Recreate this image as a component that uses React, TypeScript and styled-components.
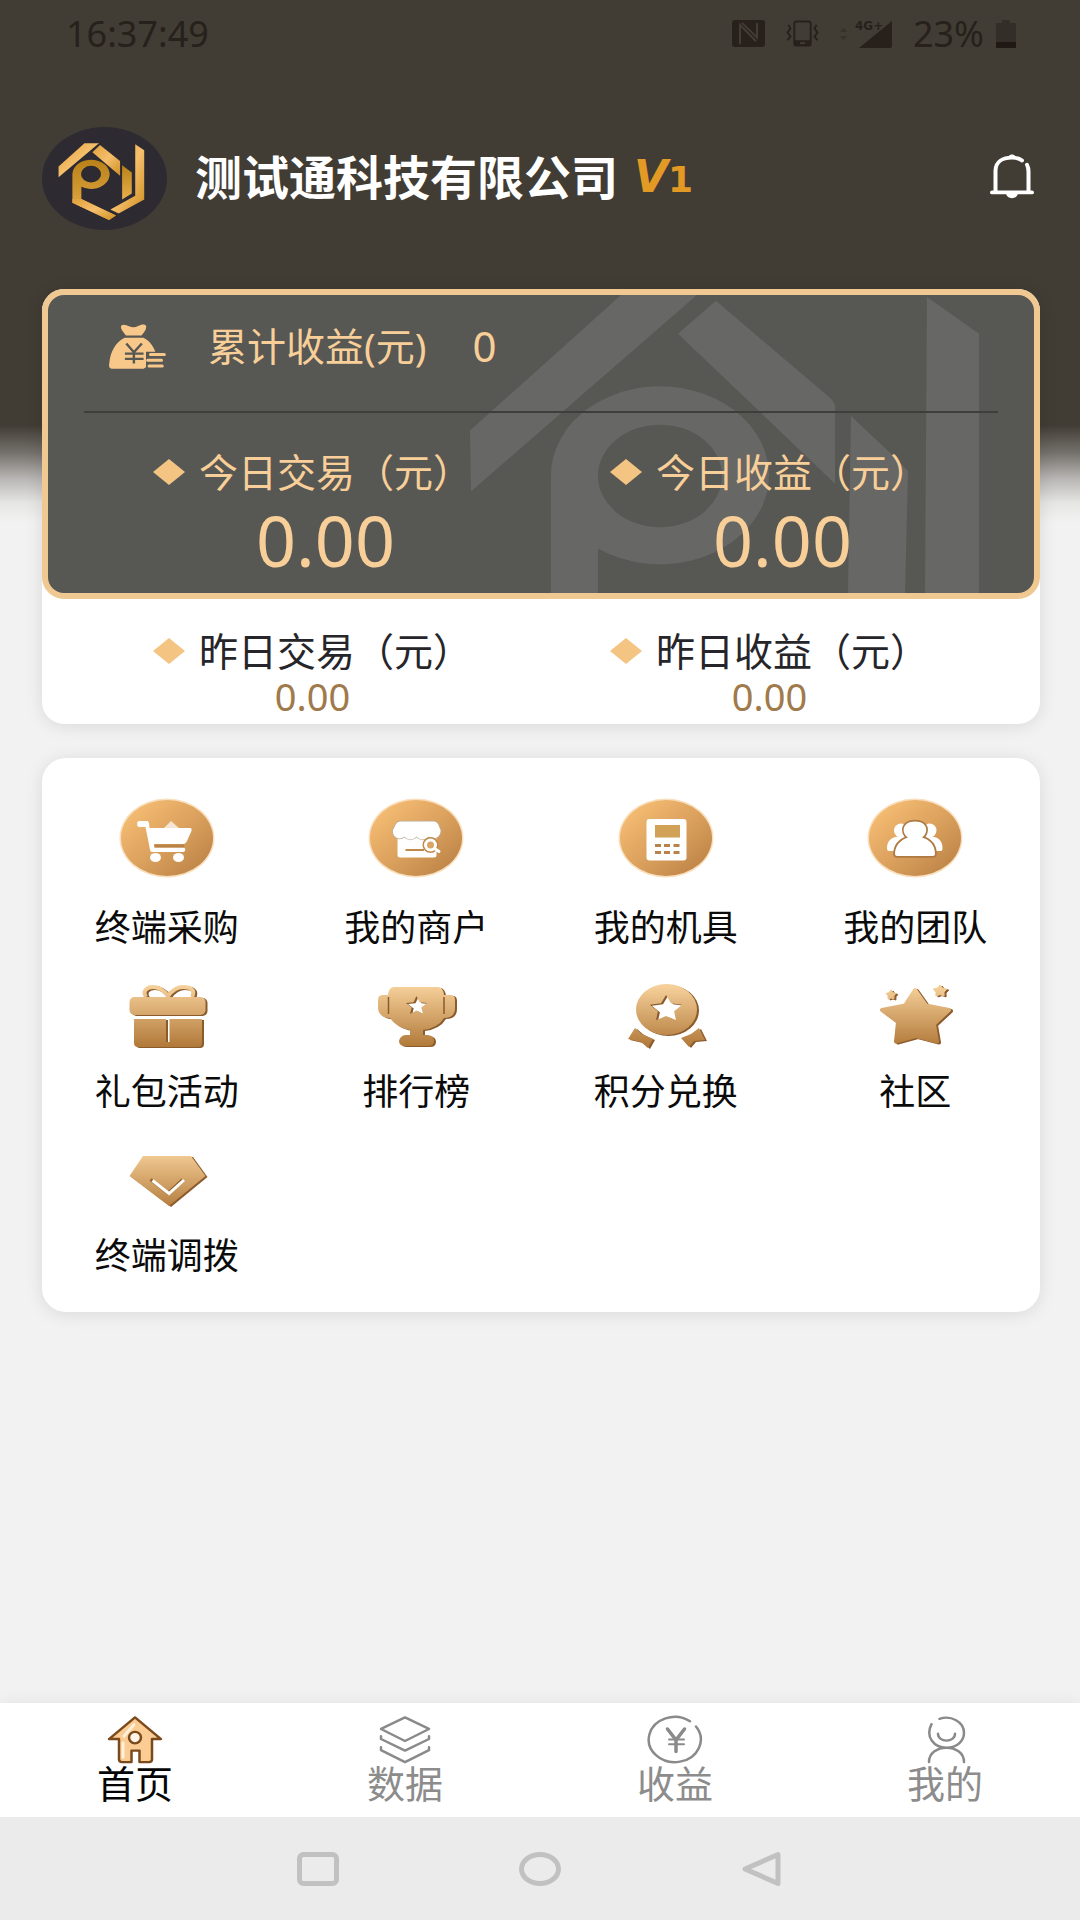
import React from "react";
import styled, { createGlobalStyle } from "styled-components";

const GlobalStyle = createGlobalStyle`
  *, *::before, *::after { box-sizing: border-box; }
  body {
    margin: 0;
    background: #f2f2f2;
    font-family: "Noto Sans", "Noto Sans CJK SC", sans-serif;
  }
  button {
    margin: 0;
    padding: 0;
    border: 0;
    background: none;
    color: inherit;
    font: inherit;
    cursor: pointer;
  }
  svg { display: block; flex: none; }
`;

const Page = styled.div`
  display: flex;
  flex-direction: column;
  min-height: 100vh;
  background: linear-gradient(
    #413d35 0,
    #413c34 425px,
    #75716c 453px,
    #b9b7b5 479px,
    #e6e6e5 503px,
    #f2f2f2 523px
  );
`;

const StatusBar = styled.div`
  display: flex;
  align-items: center;
  justify-content: space-between;
  height: 67px;
  padding: 0 64px 0 66px;
  color: #27201b;
  font-size: 36px;
  line-height: 40px;
`;

const StatusIcons = styled.div`
  display: flex;
  align-items: center;
  gap: 20px;
`;

const Signal = styled.div`
  display: flex;
  align-items: center;
  gap: 8px;
`;

const Battery = styled.div`
  display: flex;
  align-items: center;
  gap: 12px;
`;

const Header = styled.header`
  display: flex;
  align-items: center;
  padding: 60px 46px 59px 42px;
`;

const Company = styled.h1`
  margin: 0 0 0 28px;
  padding-bottom: 4px;
  color: #fff;
  font-size: 47px;
  line-height: 56px;
  font-weight: 700;
  white-space: nowrap;
`;

const Level = styled.span`
  display: flex;
  align-items: baseline;
  margin-left: 16px;
  color: #e39a25;
  font-family: "DejaVu Sans", sans-serif;
  font-size: 36px;
  line-height: 44px;
  font-weight: 700;
`;

const LevelLetter = styled.em`
  font-size: 44px;
  line-height: 44px;
`;

const BellButton = styled.button`
  margin-left: auto;
  padding-bottom: 6px;
`;

const Main = styled.main`
  display: flex;
  flex: 1;
  flex-direction: column;
  gap: 34px;
  padding: 0 40px 40px 42px;
`;

const Summary = styled.section`
  border-radius: 22px;
  background: #fff;
  box-shadow: 0 2px 18px rgba(0, 0, 0, 0.1);
`;

const GoldCard = styled.div`
  position: relative;
  overflow: hidden;
  padding: 0 36px 15px;
  border: 6px solid #efc892;
  border-radius: 22px;
  background: #575754;
  color: #f8cf98;
`;

const Watermark = styled.svg`
  position: absolute;
  top: 0;
  right: 54px;
`;

const TotalRow = styled.div`
  position: relative;
  display: flex;
  align-items: center;
  height: 118px;
  padding: 0 24px 14px;
  border-bottom: 2px solid #3e3e3b;
  font-size: 39px;
  line-height: 48px;
`;

const TotalLabel = styled.span`
  margin: 0 46px 0 42px;
`;

const Total = styled.span`
  font-size: 42px;
`;

const Stats = styled.div<{ $top: number }>`
  position: relative;
  display: grid;
  grid-template-columns: 1fr 1fr;
  padding-top: ${(p) => p.$top}px;
`;

const Yesterday = styled.div`
  padding: 0 42px 8px;
  color: #26262a;
`;

const StatLabel = styled.div`
  display: flex;
  align-items: center;
  justify-content: center;
  gap: 14px;
  font-size: 39px;
  line-height: 48px;
  white-space: nowrap;
`;

const BigValue = styled.div`
  margin-top: 6px;
  padding-left: 26px;
  font-size: 70px;
  line-height: 76px;
  text-align: center;
`;

const SmallValue = styled.div`
  margin-top: 1px;
  color: #a07a4a;
  font-size: 38px;
  line-height: 40px;
  text-align: center;
`;

const Menu = styled.section`
  display: grid;
  grid-template-columns: repeat(4, 1fr);
  padding: 32px 0 30px;
  border-radius: 24px;
  background: #fff;
  box-shadow: 0 2px 18px rgba(0, 0, 0, 0.1);
`;

const MenuItem = styled.button`
  display: flex;
  flex-direction: column;
  align-items: center;
  color: #0b0b0b;
  font-size: 36px;
  line-height: 52px;
`;

const Raised = styled.g`
  filter: drop-shadow(2px 1px 0 #8b5b2c);
`;

const TabBar = styled.nav`
  display: grid;
  grid-template-columns: repeat(4, 1fr);
  height: 114px;
  background: #fff;
  box-shadow: 0 0 16px rgba(0, 0, 0, 0.07);
`;

const Tab = styled.button<{ $active?: boolean }>`
  display: flex;
  flex-direction: column;
  align-items: center;
  padding-top: 12px;
  color: ${(p) => (p.$active ? "#050505" : "#8c8c8c")};
  font-size: 38px;
  line-height: 36px;
`;

const SystemNav = styled.nav`
  display: flex;
  justify-content: center;
  gap: 178px;
  height: 103px;
  background: #ebebeb;
`;

const starPoints = (cx: number, cy: number, rx: number, ry: number, inner = 0.46) =>
  Array.from({ length: 10 }, (_, i) => {
    const a = (Math.PI * i) / 5 - Math.PI / 2;
    const k = i % 2 ? inner : 1;
    return `${(cx + Math.cos(a) * rx * k).toFixed(1)},${(cy + Math.sin(a) * ry * k).toFixed(1)}`;
  }).join(" ");

const HiddenDefs = styled.svg`
  position: absolute;
`;

const Gradients = () => (
  <HiddenDefs width="0" height="0" aria-hidden="true">
    <defs>
      <linearGradient id="coin" x1="0" y1="0" x2="1" y2="1">
        <stop offset="0.1" stopColor="#f6bd74" />
        <stop offset="0.5" stopColor="#dca25e" />
        <stop offset="1" stopColor="#b67d42" />
      </linearGradient>
      <linearGradient id="bronze" gradientUnits="userSpaceOnUse" x1="0" y1="32" x2="0" y2="96">
        <stop offset="0" stopColor="#f6d09a" />
        <stop offset="1" stopColor="#ad7434" />
      </linearGradient>
      <linearGradient id="gold" x1="0" y1="0" x2="1" y2="1">
        <stop offset="0" stopColor="#e0a03a" />
        <stop offset="0.5" stopColor="#f5bf6c" />
        <stop offset="1" stopColor="#cf8f20" />
      </linearGradient>
      <linearGradient id="goldDeep" x1="0" y1="0" x2="0" y2="1">
        <stop offset="0" stopColor="#b98218" />
        <stop offset="1" stopColor="#e9ae4c" />
      </linearGradient>
    </defs>
  </HiddenDefs>
);

const Avatar = () => (
  <svg width="125" height="103" viewBox="124 380 362 310" preserveAspectRatio="none" role="img" aria-label="logo">
    <ellipse cx="305" cy="535" rx="181" ry="155" fill="#2d2b31" />
    <path fill="url(#gold)" d="M172 499 247 429H289L172 531Z" />
    <path fill="url(#gold)" d="M292 434 350 482V527L270 456Z" />
    <path
      fill="url(#goldDeep)"
      fillRule="evenodd"
      d="M212 522A54 44 0 1 1 238 560V597L338 646 318 660 212 608ZM237 522A29 25 0 1 0 295 522 29 25 0 1 0 237 522Z"
    />
    <path fill="url(#gold)" d="M212 597 238 597 338 646 318 660 212 608Z" />
    <path fill="url(#goldDeep)" d="M356 495 384 517V580L356 598Z" />
    <path fill="url(#gold)" d="M394 432 420 450V598L346 640 322 628 394 587Z" />
  </svg>
);

const Bell = () => (
  <svg
    width="44"
    height="46"
    viewBox="0 0 44 49"
    preserveAspectRatio="none"
    fill="none"
    stroke="#fff"
    strokeWidth="4"
    strokeLinecap="round"
  >
    <path d="M2 42H42M5.500 41V19C5.500 9 13 5 22 5 26 5 29.500 6 32 8M37 12.500C38 14.500 38.500 17 38.500 20V41" />
    <path d="M16 5.500C19 4 19 1.500 22 1.500 25 1.500 25 4 28 5.500ZM16 43C17 50 27 50 28 43Z" fill="#fff" stroke="none" />
  </svg>
);

const BankMark = () => (
  <Watermark
    width="512"
    height="299"
    viewBox="468 295 512 309"
    preserveAspectRatio="none"
    fill="#676765"
    aria-hidden="true"
  >
    <path d="M470 435 621 295H697L471 498Z" />
    <path d="M716 301 832 403 835 409V490L678 335Z" />
    <path
      fillRule="evenodd"
      d="M551 482A109 92 0 1 1 598 557V604H551ZM598 482A62 53 0 1 0 722 482 62 53 0 1 0 598 482Z"
    />
    <path d="M851 420 895 463 908 477 905 604H848Z" />
    <path d="M927 297 979 335V604H925Z" />
  </Watermark>
);

const MoneyBag = () => (
  <svg width="58" height="47" viewBox="315 160 168 140" preserveAspectRatio="none" aria-hidden="true">
    <g fill="#f8c88a">
      <path d="M353 168C360 162 368 166 376 170 384 174 394 174 402 169 410 165 420 162 425 168 428 176 420 188 412 197H367C360 188 350 176 353 168Z" />
      <path d="M363 204H418C434 212 446 228 452 246H425V292L418 296H326C318 296 317 288 319 278 322 248 335 218 363 204Z" />
    </g>
    <path
      d="M368 221 390 247 413 221M364 251H418M364 267H418M390 247V281"
      fill="none"
      stroke="#575754"
      strokeWidth="7"
    />
    <path
      d="M438 254H478M430 271H470M434 288H472"
      fill="none"
      stroke="#f8c88a"
      strokeWidth="9"
      strokeLinecap="round"
    />
  </svg>
);

const Diamond = () => (
  <svg width="32" height="26" viewBox="0 0 32 26" aria-hidden="true">
    <path d="M16 0 32 13 16 26 0 13Z" fill="#f4c483" />
  </svg>
);

const MenuIcon = ({ coin, children }: { coin?: boolean; children: React.ReactNode }) => (
  <svg width="112" height="112" viewBox="0 0 112 112" aria-hidden="true">
    {coin && <ellipse cx="56" cy="48" rx="47.500" ry="39.500" fill="#f9dfbd" />}
    {coin && <ellipse cx="56" cy="48" rx="46" ry="38" fill="url(#coin)" />}
    {children}
  </svg>
);

const CartIcon = () => (
  <MenuIcon coin>
    <path d="M52 39 60 31 69 39Z" fill="#f4e6d2" />
    <g fill="#fff">
      <path d="M28 31H36C38 31 38 33 38.500 38H79C81 38 81 40 80 42L76 51C75 53 74 54 72 54H43L43.500 57.500H72C75 57.500 75 62 72 62H42C39 62 39 60 38.500 57L34.500 37H28C25.500 37 25.500 31 28 31Z" />
      <ellipse cx="44.500" cy="67.500" rx="5.500" ry="4.500" />
      <ellipse cx="67.500" cy="67.500" rx="5.500" ry="4.500" />
    </g>
    <path d="M43.500 56H73" stroke="#b98348" strokeWidth="3" />
  </MenuIcon>
);

const ShopIcon = () => (
  <MenuIcon coin>
    <path d="M37.500 44H76.500V65Q76.500 67.500 74 67.500H40Q37.500 67.500 37.500 65Z" fill="#fff" />
    <path
      d="M40 31.500H74Q76.500 31.500 78 34L80.500 40C81 47 74 51 68.500 46.500 65 50.500 60 50.500 56.500 46.500 53 50.500 48 50.500 44.500 46.500 39 51 32 47 33 40L36 34Q37.500 31.500 40 31.500Z"
      fill="#fff"
      stroke="#b9ad9c"
      strokeWidth="1.500"
      paintOrder="stroke"
    />
    <path d="M45.500 60H64" stroke="#c08a4d" strokeWidth="2" />
    <circle cx="70.500" cy="55" r="8" fill="#c08a4d" />
    <circle cx="70.500" cy="55" r="5" fill="#d8a566" stroke="#fff" strokeWidth="3" />
    <path d="M74.500 58.500 79 61.500" stroke="#fff" strokeWidth="3" strokeLinecap="round" />
  </MenuIcon>
);

const PosIcon = () => (
  <MenuIcon coin>
    <rect x="36.500" y="29" width="40" height="41.500" rx="3" fill="#fff" />
    <rect x="45" y="35" width="25" height="12.500" fill="#d0a157" />
    <path
      d="M45 55.500H51M54 55.500H60M63.500 55.500H69.500M45 62.500H51M54 62.500H60M63.500 62.500H69.500"
      stroke="#b98348"
      strokeWidth="3"
    />
  </MenuIcon>
);

const TeamIcon = () => (
  <MenuIcon coin>
    <g fill="#fff">
      <ellipse cx="42" cy="40.500" rx="7" ry="7" />
      <ellipse cx="70.500" cy="40.500" rx="7" ry="7" />
      <path d="M28 58C28 50 34 46.500 40 46.500H46V61H30Q28 61 28 58ZM83.500 58C83.500 50 78 46.500 72 46.500H66V61H82Q83.500 61 83.500 58Z" />
    </g>
    <path
      d="M36 64C36 55 42 50 49 47.500 42 43 43 31.500 56 31.500 69 31.500 70 43 63 47.500 71 50 76 55 76 64Q76 66 74 66H38Q36 66 36 64Z"
      fill="#fff"
      stroke="#ae7a43"
      strokeWidth="3.500"
      paintOrder="stroke"
    />
  </MenuIcon>
);

const GiftIcon = () => (
  <MenuIcon>
    <Raised fill="url(#bronze)">
      <path
        d="M35 43C31 37 36 33 42 33 49 33 54 38 57 42 60 38 65 33 72 33 79 33 85 36 81 43"
        fill="none"
        stroke="url(#bronze)"
        strokeWidth="4"
      />
      <rect x="18.500" y="43" width="76" height="18" rx="5" />
      <path d="M23 65H55V88H58.500V65H91V89Q91 93 87 93H27Q23 93 23 89Z" />
    </Raised>
  </MenuIcon>
);

const TrophyIcon = () => (
  <MenuIcon>
    <Raised fill="url(#bronze)">
      <path
        fillRule="evenodd"
        d={`M34 33H78Q83 33 84 41H91Q95 41 95 46V54Q95 64 84 64 78 74 63 76V81H68Q74 82 74 87 74 92 68 92H45Q39 92 39 87 40 82 45 81H50V76C41 74 35 71 30 64 22 64 18 59 18 54V46Q18 41 23 41H28Q29 33 34 33Z M${starPoints(56.5, 52, 11, 10)}Z`}
      />
      <path d="M28.500 43V60M84 43V60" stroke="#8b5b2c" strokeWidth="1.500" />
    </Raised>
  </MenuIcon>
);

const MedalIcon = () => (
  <MenuIcon>
    <Raised fill="url(#bronze)">
      <path
        fillRule="evenodd"
        d={`M26 55.500A30.500 25.500 0 1 1 87 55.500 30.500 25.500 0 1 1 26 55.500Z M${starPoints(56, 55, 17, 14, 0.5)}Z`}
      />
      <path d="M25 74 32 80 43 85 38 94 31 88 18 85ZM89 74 95 86 84 87 79 93 71 84 81 80Z" />
    </Raised>
  </MenuIcon>
);

const StarIcon = () => (
  <MenuIcon>
    <Raised fill="url(#bronze)" stroke="url(#bronze)" strokeLinejoin="round">
      <path strokeWidth="4" d="M56 36 67 51.500 90 56 75 70 78 87.500 57 82 37 87.500 39 68 23 56 46 51.500Z" />
      <polygon points={starPoints(32, 41, 5, 5, 0.6)} />
      <polygon points={starPoints(81, 37, 7, 6, 0.6)} />
    </Raised>
  </MenuIcon>
);

const GemIcon = () => (
  <MenuIcon>
    <Raised fill="url(#bronze)">
      <path d="M32 38H80L94.500 58 58 88 18.500 58Z" />
    </Raised>
    <path d="M39.500 61.500 57 75 71.500 61.500" fill="none" stroke="#96632f" strokeWidth="3" />
    <path d="M41.500 62.500 58 75.500 73 62" fill="none" stroke="#fff" strokeWidth="3" />
  </MenuIcon>
);

const TabIcon = ({ children }: { children: React.ReactNode }) => (
  <svg
    width="56"
    height="50"
    viewBox="0 0 56 52"
    preserveAspectRatio="none"
    fill="none"
    stroke="#8a8a8a"
    strokeWidth="2.500"
    strokeLinecap="round"
    strokeLinejoin="round"
    aria-hidden="true"
  >
    {children}
  </svg>
);

const HomeTab = () => (
  <TabIcon>
    <path
      d="M28 2.500 54 25H45V46Q45 49 42 49H32.500V37H24.500V49H15Q12 49 12 46V25H2Z"
      fill="#fbcd94"
      stroke="#7a4a1c"
    />
    <path d="M17 22 27 10M16 29V44" stroke="#fff0dc" strokeWidth="3" />
    <circle cx="28" cy="23.500" r="6" fill="#fff4e6" stroke="#7a4a1c" />
  </TabIcon>
);

const DataTab = () => (
  <TabIcon>
    <path d="M28 2.500 52 14.500 28 27 4 14.500ZM4 22V25L28 37 52 25V22M4 33.500V36.500L28 49 52 36.500V33.500" />
  </TabIcon>
);

const IncomeTab = () => (
  <TabIcon>
    <path d="M43 6.500A26 23.500 0 1 0 49 12" />
    <path d="M20.500 14.500 29 26 37.500 14.500M29 26V38" strokeWidth="3.500" />
    <path d="M22 25.500H37M22 30.500H37" strokeWidth="2" />
  </TabIcon>
);

const MineTab = () => (
  <TabIcon>
    <path d="M14.500 9.500C8 23 17 34 29.500 34 40 34 47 27 47 18.500 47 7 34 0 22.500 4M21 19.500C21 29 38 29 38 19.500M12 49C12 29 47 29 47 49" />
  </TabIcon>
);

const SystemIcon = ({ children }: { children: React.ReactNode }) => (
  <svg width="44" height="38" viewBox="0 0 44 38" fill="none" stroke="#c1c1c1" strokeWidth="5" strokeLinejoin="round">
    {children}
  </svg>
);

const today = [
  { label: "今日交易（元）", value: "0.00" },
  { label: "今日收益（元）", value: "0.00" },
];

const yesterday = [
  { label: "昨日交易（元）", value: "0.00" },
  { label: "昨日收益（元）", value: "0.00" },
];

const menu = [
  { label: "终端采购", Icon: CartIcon },
  { label: "我的商户", Icon: ShopIcon },
  { label: "我的机具", Icon: PosIcon },
  { label: "我的团队", Icon: TeamIcon },
  { label: "礼包活动", Icon: GiftIcon },
  { label: "排行榜", Icon: TrophyIcon },
  { label: "积分兑换", Icon: MedalIcon },
  { label: "社区", Icon: StarIcon },
  { label: "终端调拨", Icon: GemIcon },
];

const tabs = [
  { label: "首页", Icon: HomeTab },
  { label: "数据", Icon: DataTab },
  { label: "收益", Icon: IncomeTab },
  { label: "我的", Icon: MineTab },
];

export default function App() {
  return (
    <Page>
      <GlobalStyle />
      <Gradients />
      <StatusBar>
        <time>16:37:49</time>
        <StatusIcons>
          <svg width="33" height="27" viewBox="0 0 33 28" preserveAspectRatio="none" aria-hidden="true">
            <rect width="33" height="28" rx="3" fill="#27201b" />
            <path d="M8 25V5L24 22M10 3 25 18V3" fill="none" stroke="#413d35" strokeWidth="2" />
          </svg>
          <svg width="35" height="27" viewBox="0 0 35 28" fill="none" stroke="#27201b" strokeWidth="2" aria-hidden="true">
            <rect x="9" y="1.500" width="17" height="25" rx="2" />
            <path d="M9 23.500H26" strokeWidth="5" />
            <path d="M15 24H20" stroke="#413d35" />
            <path d="M3 5 5 9 2 13 5 17 2 21M32 5 30 9 33 13 30 17 33 21" />
          </svg>
          <Signal>
            <svg width="7" height="12" viewBox="0 0 7 12" fill="#36302a" aria-hidden="true">
              <path d="M0 4 3.500 0 7 4ZM0 8 3.500 12 7 8Z" />
            </svg>
            <svg width="38" height="34" viewBox="0 0 38 34" fill="#27201b" aria-hidden="true">
              <path d="M4 31 37 4V29Q37 31 35 31Z" />
              <text x="0" y="13" fontSize="12" fontWeight="700" fontFamily="DejaVu Sans, sans-serif">
                4G+
              </text>
            </svg>
          </Signal>
          <Battery>
            <span>23%</span>
            <svg width="20" height="28" viewBox="0 0 20 28" aria-hidden="true">
              <path d="M0 3H6V0H14V3H20V23H0Z" fill="#342e28" />
              <path d="M0 22H20V28H0Z" fill="#1f1814" />
            </svg>
          </Battery>
        </StatusIcons>
      </StatusBar>

      <Header>
        <Avatar />
        <Company>测试通科技有限公司</Company>
        <Level>
          <LevelLetter>V</LevelLetter>1
        </Level>
        <BellButton type="button" aria-label="消息">
          <Bell />
        </BellButton>
      </Header>

      <Main>
        <Summary>
          <GoldCard>
            <BankMark />
            <TotalRow>
              <MoneyBag />
              <TotalLabel>累计收益(元)</TotalLabel>
              <Total>0</Total>
            </TotalRow>
            <Stats $top={35}>
              {today.map((s) => (
                <div key={s.label}>
                  <StatLabel>
                    <Diamond />
                    {s.label}
                  </StatLabel>
                  <BigValue>{s.value}</BigValue>
                </div>
              ))}
            </Stats>
          </GoldCard>
          <Yesterday>
            <Stats $top={28}>
              {yesterday.map((s) => (
                <div key={s.label}>
                  <StatLabel>
                    <Diamond />
                    {s.label}
                  </StatLabel>
                  <SmallValue>{s.value}</SmallValue>
                </div>
              ))}
            </Stats>
          </Yesterday>
        </Summary>

        <Menu>
          {menu.map(({ label, Icon }) => (
            <MenuItem key={label} type="button">
              <Icon />
              {label}
            </MenuItem>
          ))}
        </Menu>
      </Main>

      <TabBar>
        {tabs.map(({ label, Icon }, i) => (
          <Tab key={label} type="button" $active={i === 0}>
            <Icon />
            {label}
          </Tab>
        ))}
      </TabBar>

      <SystemNav>
        <button type="button" aria-label="最近任务">
          <SystemIcon>
            <rect x="3.500" y="4.500" width="37" height="29" rx="4" />
          </SystemIcon>
        </button>
        <button type="button" aria-label="主屏幕">
          <SystemIcon>
            <ellipse cx="22" cy="19" rx="18.500" ry="14.500" />
          </SystemIcon>
        </button>
        <button type="button" aria-label="返回">
          <SystemIcon>
            <path d="M5 19 38 4.500V33.500Z" />
          </SystemIcon>
        </button>
      </SystemNav>
    </Page>
  );
}
